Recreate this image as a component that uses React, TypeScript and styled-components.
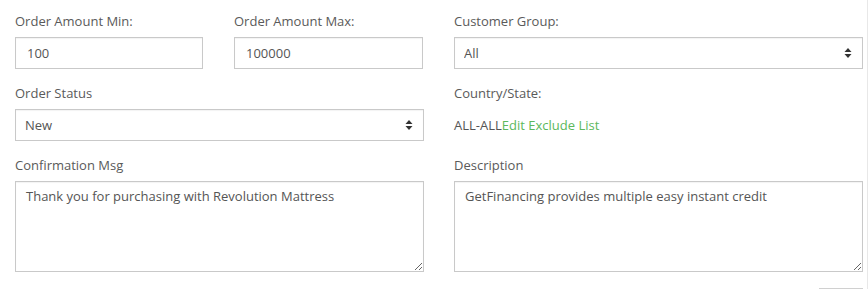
import React from "react";
import styled, { createGlobalStyle } from "styled-components";

const Global = createGlobalStyle`
  html, body { margin: 0; padding: 0; background: #fff; }
  body { font-family: "Open Sans", "Liberation Sans", sans-serif; font-size: 13px; color: #555; }
  * { box-sizing: border-box; }
`;

const Page = styled.div`
  width: 868px;
  height: 289px;
  overflow: hidden;
  border-right: 1px solid #e8e8e8;
  padding: 12px 0 0 15px;
`;

const Grid = styled.div`
  display: grid;
  grid-template-columns: 409px 409px;
  column-gap: 30px;
`;

const Pair = styled.div`
  display: grid;
  grid-template-columns: 188px 189px;
  column-gap: 31px;
`;

const Group = styled.div<{ $last?: boolean }>`
  margin-bottom: ${(p) => (p.$last ? "0" : "15px")};
`;

const Label = styled.label`
  display: block;
  font-size: 13px;
  line-height: 18px;
  margin-bottom: 7px;
  color: #5a5a5a;
`;

const controlBase = `
  display: block;
  width: 100%;
  font-family: "Open Sans", "Liberation Sans", sans-serif;
  font-size: 13px;
  color: #555;
  background: #fff;
  border: 1px solid #c9c9c9;
  border-radius: 0;
  outline: none;
  box-shadow: inset 0 1px 1px rgba(0, 0, 0, 0.05);
`;

const Input = styled.input`
  ${controlBase}
  height: 32px;
  padding: 0 11px;
`;

const SelectWrap = styled.div`
  position: relative;
`;

const SelectBox = styled.select`
  ${controlBase}
  height: 32px;
  padding: 0 30px 0 9px;
  appearance: none;
  -webkit-appearance: none;
`;

const Caret = styled.svg`
  position: absolute;
  right: 11px;
  top: 11px;
  pointer-events: none;
`;

const TextArea = styled.textarea`
  ${controlBase}
  height: 91px;
  padding: 5px 10px;
  line-height: 18px;
  resize: vertical;
`;

const Static = styled.div`
  height: 32px;
  display: flex;
  align-items: center;
  color: #555;
  line-height: 18px;
`;

const Link = styled.a`
  color: #5cb85c;
  text-decoration: none;
  cursor: pointer;
`;

const Footer = styled.div`
  display: flex;
  justify-content: flex-end;
  margin-top: 16px;
`;

const Button = styled.button`
  width: 44px;
  height: 30px;
  background: #fff;
  border: 1px solid #d0d0d0;
`;

const Select: React.FC<{ value: string }> = ({ value }) => (
  <SelectWrap>
    <SelectBox defaultValue={value}>
      <option>{value}</option>
    </SelectBox>
    <Caret width="8" height="10" viewBox="0 0 8 10">
      <path d="M4 0 L7.5 4 L0.5 4 Z" fill="#333" />
      <path d="M0.5 6 L7.5 6 L4 10 Z" fill="#333" />
    </Caret>
  </SelectWrap>
);

export default function App() {
  return (
    <>
      <Global />
      <Page>
        <Grid>
          <div>
            <Pair>
              <Group>
                <Label>Order Amount Min:</Label>
                <Input defaultValue="100" />
              </Group>
              <Group>
                <Label>Order Amount Max:</Label>
                <Input defaultValue="100000" />
              </Group>
            </Pair>
            <Group>
              <Label>Order Status</Label>
              <Select value="New" />
            </Group>
            <Group>
              <Label>Confirmation Msg</Label>
              <TextArea defaultValue="Thank you for purchasing with Revolution Mattress" />
            </Group>
          </div>
          <div>
            <Group>
              <Label>Customer Group:</Label>
              <Select value="All" />
            </Group>
            <Group>
              <Label>Country/State:</Label>
              <Static>
                ALL-ALL<Link>Edit Exclude List</Link>
              </Static>
            </Group>
            <Group $last>
              <Label>Description</Label>
              <TextArea defaultValue="GetFinancing provides multiple easy instant credit" />
            </Group>
            <Footer>
              <Button />
            </Footer>
          </div>
        </Grid>
      </Page>
    </>
  );
}
